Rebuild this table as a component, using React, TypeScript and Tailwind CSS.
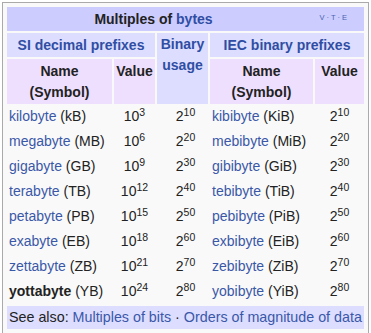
import React from "react";

const rows = [
  { si: "kilobyte", sis: "kB", dec: "3", bin: "10", iec: "kibibyte", iecs: "KiB" },
  { si: "megabyte", sis: "MB", dec: "6", bin: "20", iec: "mebibyte", iecs: "MiB" },
  { si: "gigabyte", sis: "GB", dec: "9", bin: "30", iec: "gibibyte", iecs: "GiB" },
  { si: "terabyte", sis: "TB", dec: "12", bin: "40", iec: "tebibyte", iecs: "TiB" },
  { si: "petabyte", sis: "PB", dec: "15", bin: "50", iec: "pebibyte", iecs: "PiB" },
  { si: "exabyte", sis: "EB", dec: "18", bin: "60", iec: "exbibyte", iecs: "EiB" },
  { si: "zettabyte", sis: "ZB", dec: "21", bin: "70", iec: "zebibyte", iecs: "ZiB" },
  { si: "yottabyte", sis: "YB", dec: "24", bin: "80", iec: "yobibyte", iecs: "YiB", bold: true },
];

const Pow = ({ base, exp }: { base: string; exp: string }) => (
  <span>
    {base}
    <sup className="text-[10.5px]">{exp}</sup>
  </span>
);

const App = () => {
  return (
    <div className="w-[371px] h-[333px] bg-white pt-[2px] pl-[2px] font-['Liberation_Sans',Arial,sans-serif] text-[14px] leading-[21px] text-[#222]">
      <div className="w-[367px] border border-[#aaa] bg-[#f9f9f9] p-[2px]">
        <table className="w-full table-fixed border-separate border-spacing-[2px]">
          <colgroup>
            <col className="w-[105px]" />
            <col className="w-[41px]" />
            <col className="w-[51px]" />
            <col className="w-[103px]" />
            <col className="w-[49px]" />
          </colgroup>
          <thead>
            <tr>
              <th colSpan={5} className="bg-[#ccccff] h-[24px] pl-[2px] pr-[66px] font-bold relative">
                Multiples of <span className="text-[#2f4ea3]">bytes</span>
                <span className="absolute right-[17px] top-[6px] text-[7.5px] leading-[10px] font-normal text-[#4a64b0]">
                  V · T · E
                </span>
              </th>
            </tr>
            <tr>
              <th colSpan={2} className="bg-[#ddddff] h-[24px] text-[#2f4ea3] font-bold">
                SI decimal prefixes
              </th>
              <th rowSpan={2} className="bg-[#ddddff] align-top pt-[1px] text-[#2f4ea3] font-bold">
                Binary usage
              </th>
              <th colSpan={2} className="bg-[#ddddff] h-[24px] text-[#2f4ea3] font-bold">
                IEC binary prefixes
              </th>
            </tr>
            <tr>
              <th className="bg-[#eedfff] h-[45px] align-top pt-[2px] font-bold">
                Name
                <br />
                (Symbol)
              </th>
              <th className="bg-[#eedfff] align-top pt-[2px] font-bold">Value</th>
              <th className="bg-[#eedfff] align-top pt-[2px] font-bold">
                Name
                <br />
                (Symbol)
              </th>
              <th className="bg-[#eedfff] align-top pt-[2px] font-bold">Value</th>
            </tr>
          </thead>
          <tbody>
            {rows.map((r) => (
              <tr key={r.si} className="h-[23px]">
                <td className="px-[2px] pb-[2px] whitespace-nowrap">
                  {r.bold ? (
                    <b className="text-[#222]">{r.si}</b>
                  ) : (
                    <span className="text-[#3a58a8]">{r.si}</span>
                  )}{" "}
                  ({r.sis})
                </td>
                <td className="text-center pb-[2px]">
                  <Pow base="10" exp={r.dec} />
                </td>
                <td className="text-center pl-[6px] pb-[2px]">
                  <Pow base="2" exp={r.bin} />
                </td>
                <td className="px-[2px] pb-[2px] whitespace-nowrap">
                  <span className="text-[#3a58a8]">{r.iec}</span> ({r.iecs})
                </td>
                <td className="text-center pb-[2px]">
                  <Pow base="2" exp={r.bin} />
                </td>
              </tr>
            ))}
            <tr>
              <td colSpan={5} className="bg-[#ddddff] h-[23px] px-[2px] whitespace-nowrap text-[14.3px]">
                See also: <span className="text-[#3a58a8]">Multiples of bits</span> ·{" "}
                <span className="text-[#3a58a8]">Orders of magnitude of data</span>
              </td>
            </tr>
          </tbody>
        </table>
      </div>
    </div>
  );
};

export default App;
